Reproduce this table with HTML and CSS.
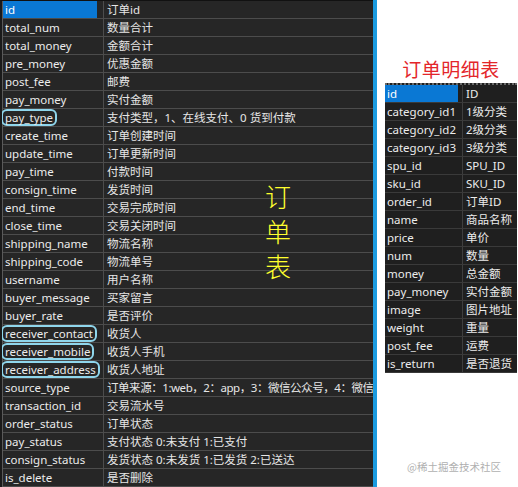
FILE: index.html
```html
<!DOCTYPE html>
<html>
<head>
<meta charset="utf-8">
<link rel="stylesheet" href="styles.css">
</head>
<body>
<div class="page">
  <div class="main">
    <div class="grid">
      <div class="row"><div class="k"><span class="sel">id</span></div><div class="v">订单id</div></div>
      <div class="row"><div class="k">total_num</div><div class="v">数量合计</div></div>
      <div class="row"><div class="k">total_money</div><div class="v">金额合计</div></div>
      <div class="row"><div class="k">pre_money</div><div class="v">优惠金额</div></div>
      <div class="row"><div class="k">post_fee</div><div class="v">邮费</div></div>
      <div class="row"><div class="k">pay_money</div><div class="v">实付金额</div></div>
      <div class="row"><div class="k"><span class="ring">pay_type</span></div><div class="v">支付类型，1、在线支付、0 货到付款</div></div>
      <div class="row"><div class="k">create_time</div><div class="v">订单创建时间</div></div>
      <div class="row"><div class="k">update_time</div><div class="v">订单更新时间</div></div>
      <div class="row"><div class="k">pay_time</div><div class="v">付款时间</div></div>
      <div class="row"><div class="k">consign_time</div><div class="v">发货时间</div></div>
      <div class="row"><div class="k">end_time</div><div class="v">交易完成时间</div></div>
      <div class="row"><div class="k">close_time</div><div class="v">交易关闭时间</div></div>
      <div class="row"><div class="k">shipping_name</div><div class="v">物流名称</div></div>
      <div class="row"><div class="k">shipping_code</div><div class="v">物流单号</div></div>
      <div class="row"><div class="k">username</div><div class="v">用户名称</div></div>
      <div class="row"><div class="k">buyer_message</div><div class="v">买家留言</div></div>
      <div class="row"><div class="k">buyer_rate</div><div class="v">是否评价</div></div>
      <div class="row"><div class="k"><span class="ring">receiver_contact</span></div><div class="v">收货人</div></div>
      <div class="row"><div class="k"><span class="ring">receiver_mobile</span></div><div class="v">收货人手机</div></div>
      <div class="row"><div class="k"><span class="ring">receiver_address</span></div><div class="v">收货人地址</div></div>
      <div class="row"><div class="k">source_type</div><div class="v tight">订单来源：1:web，2：app，3：微信公众号，4：微信</div></div>
      <div class="row"><div class="k">transaction_id</div><div class="v">交易流水号</div></div>
      <div class="row"><div class="k">order_status</div><div class="v">订单状态</div></div>
      <div class="row"><div class="k">pay_status</div><div class="v">支付状态 0:未支付 1:已支付</div></div>
      <div class="row"><div class="k">consign_status</div><div class="v">发货状态 0:未发货 1:已发货 2:已送达</div></div>
      <div class="row"><div class="k">is_delete</div><div class="v">是否删除</div></div>
    </div>
    <div class="label"><span>订</span><span>单</span><span>表</span></div>
  </div>
  <div class="bar"></div>
  <div class="side">
    <div class="title">订单明细表</div>
    <div class="tbl">
      <div class="srow"><div class="sk"><span class="ssel">id</span></div><div class="sv">ID</div></div>
      <div class="srow"><div class="sk">category_id1</div><div class="sv">1级分类</div></div>
      <div class="srow"><div class="sk">category_id2</div><div class="sv">2级分类</div></div>
      <div class="srow"><div class="sk">category_id3</div><div class="sv">3级分类</div></div>
      <div class="srow"><div class="sk">spu_id</div><div class="sv">SPU_ID</div></div>
      <div class="srow"><div class="sk">sku_id</div><div class="sv">SKU_ID</div></div>
      <div class="srow"><div class="sk">order_id</div><div class="sv">订单ID</div></div>
      <div class="srow"><div class="sk">name</div><div class="sv">商品名称</div></div>
      <div class="srow"><div class="sk">price</div><div class="sv">单价</div></div>
      <div class="srow"><div class="sk">num</div><div class="sv">数量</div></div>
      <div class="srow"><div class="sk">money</div><div class="sv">总金额</div></div>
      <div class="srow"><div class="sk">pay_money</div><div class="sv">实付金额</div></div>
      <div class="srow"><div class="sk">image</div><div class="sv">图片地址</div></div>
      <div class="srow"><div class="sk">weight</div><div class="sv">重量</div></div>
      <div class="srow"><div class="sk">post_fee</div><div class="sv">运费</div></div>
      <div class="srow"><div class="sk">is_return</div><div class="sv">是否退货</div></div>
    </div>
    <div class="mark">@稀土掘金技术社区</div>
  </div>
</div>
</body>
</html>
```
FILE: styles.css
```css
html, body {
  margin: 0;
  padding: 0;
  background: #ffffff;
}
body {
  width: 518px;
  height: 487px;
  overflow: hidden;
  font-family: "Noto Sans", "Noto Sans CJK SC", sans-serif;
  font-size: 11.5px;
}
.page {
  display: flex;
  height: 487px;
}
.main {
  position: relative;
  width: 373px;
  height: 487px;
  background: #262626;
  box-sizing: border-box;
  border-left: 2px solid #1a1a1a;
  border-top: 1px solid #111;
  overflow: hidden;
}
.grid {
  display: flex;
  flex-direction: column;
  border-left: 1px solid #5a5a5a;
}
.row {
  display: flex;
  height: 18px;
  box-sizing: border-box;
  border-bottom: 1px solid #4c4c4c;
}
.k {
  width: 101px;
  flex: none;
  border-right: 1px solid #4c4c4c;
  color: #ececec;
  line-height: 17px;
  padding-left: 2px;
  box-sizing: border-box;
  white-space: nowrap;
}
.v {
  flex: 1;
  color: #e6e6e6;
  line-height: 17px;
  padding-left: 3px;
  white-space: nowrap;
  overflow: hidden;
}
.tight {
  letter-spacing: -0.45px;
}
.sel {
  display: block;
  width: 94px;
  margin-left: -2px;
  padding-left: 2px;
  box-sizing: border-box;
  background: #0a78d4;
  color: #fff;
}
.ring {
  display: inline-block;
  margin-left: -4px;
  padding: 0 2px;
  height: 17px;
  line-height: 13px;
  box-sizing: border-box;
  border: 2px solid #8fd6ec;
  border-radius: 6px;
}
.label {
  position: absolute;
  left: 263px;
  top: 177px;
  display: flex;
  flex-direction: column;
  color: #ffff2e;
  font-family: "Noto Sans CJK SC", sans-serif;
  font-weight: 300;
  font-size: 26px;
  line-height: 35px;
}
.bar {
  width: 4px;
  flex: none;
  background: #1b9be0;
}
.side {
  flex: 1;
  display: flex;
  flex-direction: column;
  padding-left: 8px;
  position: relative;
}
.title {
  width: 132px;
  text-align: center;
  margin-top: 57px;
  height: 26px;
  line-height: 24px;
  color: #e3262a;
  font-family: "Noto Sans CJK SC", serif;
  font-size: 19px;
  letter-spacing: 0.5px;
}
.tbl {
  width: 132px;
  background: #1f1f1f;
  border-top: 2px dotted #6a6a6a;
  display: flex;
  flex-direction: column;
}
.srow {
  display: flex;
  height: 18px;
  box-sizing: border-box;
  border-bottom: 1px solid #3a3a3a;
}
.sk {
  width: 78px;
  flex: none;
  border-right: 1px solid #3e3e3e;
  box-sizing: border-box;
  color: #ececec;
  line-height: 17px;
  padding-left: 2px;
  white-space: nowrap;
}
.sv {
  flex: 1;
  color: #ececec;
  line-height: 17px;
  padding-left: 3px;
  white-space: nowrap;
  overflow: hidden;
}
.ssel {
  display: block;
  width: 73px;
  margin-left: -2px;
  padding-left: 2px;
  box-sizing: border-box;
  background: #0a78d4;
  color: #fff;
}
.mark {
  margin-top: 87px;
  margin-left: 22px;
  color: #b0b0b0;
  font-family: "Noto Sans CJK SC", sans-serif;
  font-size: 10.5px;
  line-height: 14px;
}
```
